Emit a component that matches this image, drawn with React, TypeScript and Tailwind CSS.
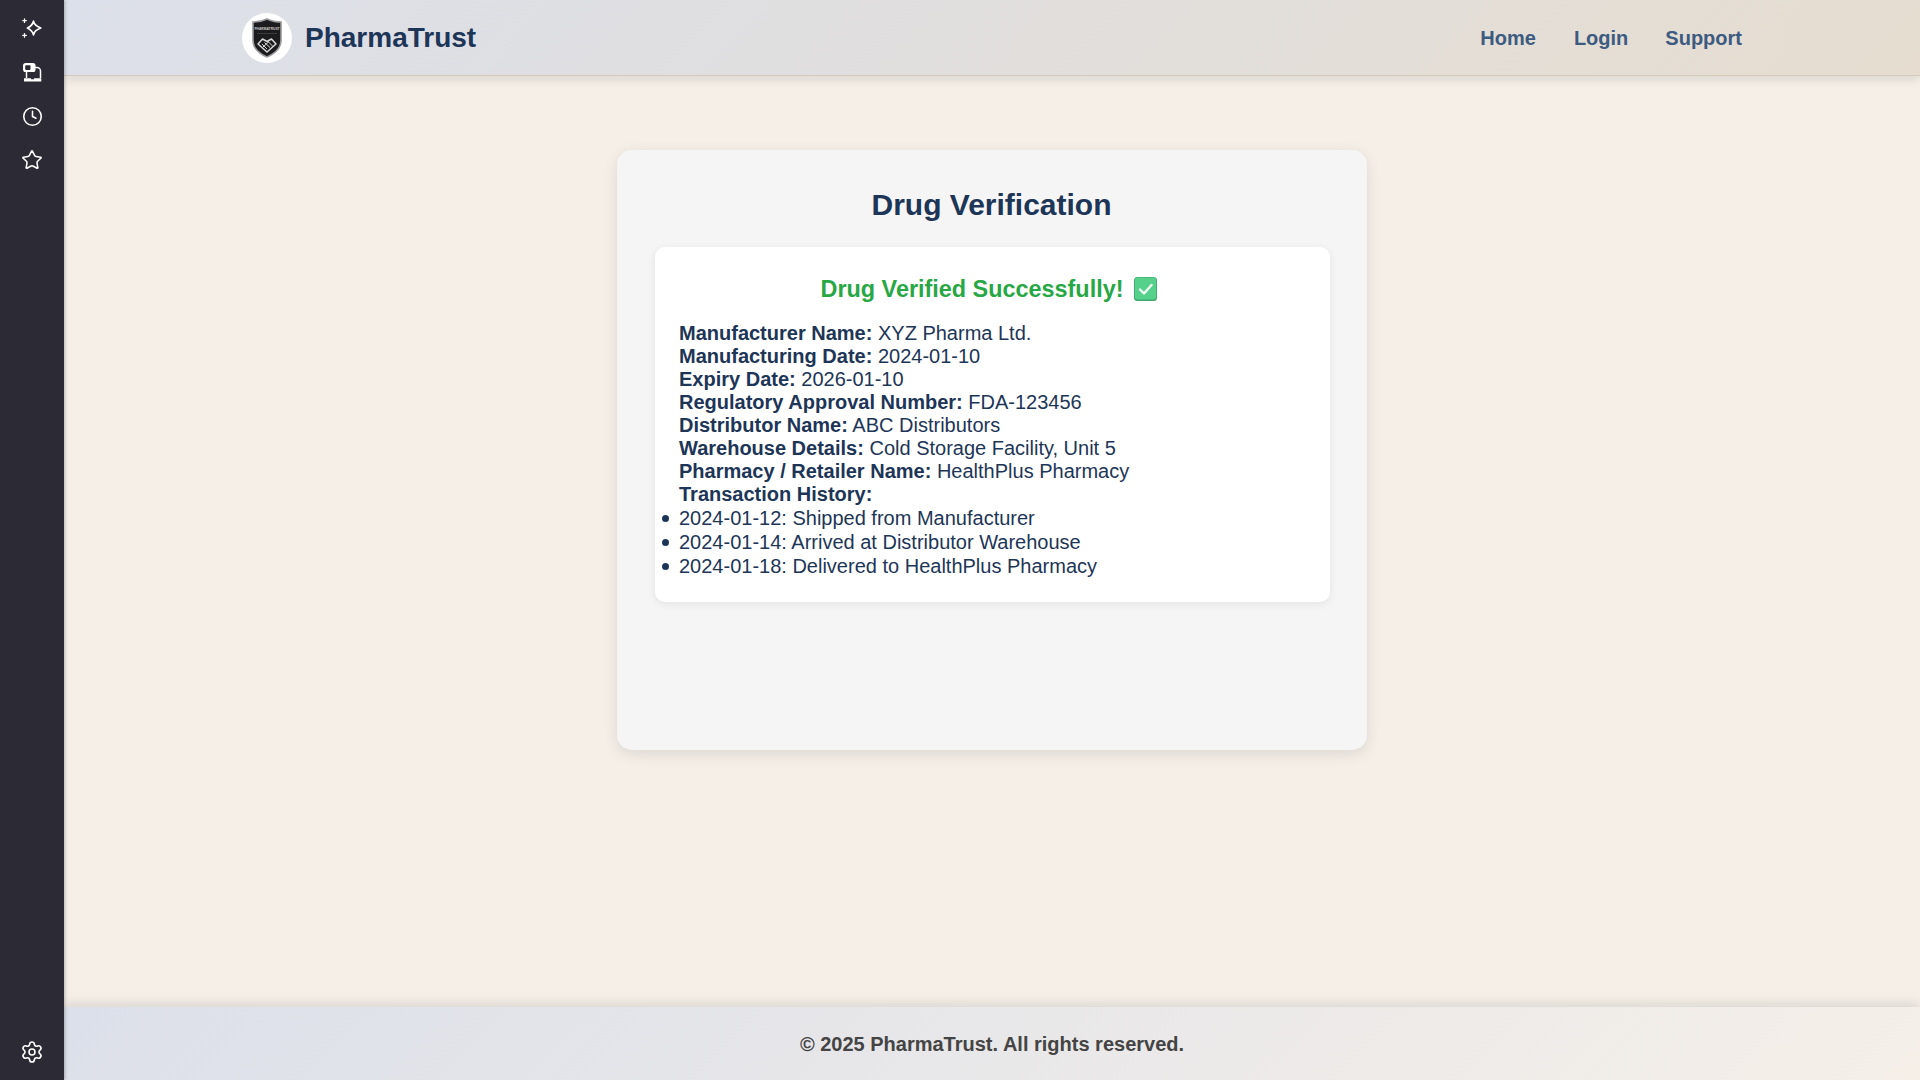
import { Clock, Settings, Star } from "lucide-react";

const rows: [string, string][] = [
  ["Manufacturer Name:", "XYZ Pharma Ltd."],
  ["Manufacturing Date:", "2024-01-10"],
  ["Expiry Date:", "2026-01-10"],
  ["Regulatory Approval Number:", "FDA-123456"],
  ["Distributor Name:", "ABC Distributors"],
  ["Warehouse Details:", "Cold Storage Facility, Unit 5"],
  ["Pharmacy / Retailer Name:", "HealthPlus Pharmacy"],
  ["Transaction History:", ""],
];

const history = [
  "2024-01-12: Shipped from Manufacturer",
  "2024-01-14: Arrived at Distributor Warehouse",
  "2024-01-18: Delivered to HealthPlus Pharmacy",
];

function Sparkle() {
  return (
    <svg width="20" height="20" viewBox="0 0 20 20" fill="none" stroke="white" strokeWidth="1.700" strokeLinejoin="round" strokeLinecap="round">
      <path d="M11.500 3.200c.6 3.300 2.200 5 7.300 6.800-5.100 1.800-6.700 3.500-7.300 6.800-.8-3.300-2.400-5-6.100-6.800 3.700-1.800 5.300-3.500 6.100-6.800z" />
      <path d="M2.500 .8v3.600M.7 2.600h3.600M2.500 15.600v3.600M.7 17.400h3.600" strokeWidth="1.300" />
    </svg>
  );
}

function Bot() {
  return (
    <svg width="19" height="19" viewBox="0 0 19 19" fill="none" stroke="white" strokeWidth="1.500" strokeLinejoin="round">
      <rect x="0.800" y="0.800" width="11" height="7.500" rx="1.800" fill="white" />
      <rect x="2.200" y="2.200" width="5.300" height="4.700" rx="0.800" fill="#2b2a35" stroke="none" />
      <path d="M11.500 4.500h2.500a3.500 3.500 0 0 1 3.500 3.500v7" />
      <path d="M3.500 8v7" />
      <path d="M1 15.300h7v1h3v-1h7.300v3.200H1z" fill="white" stroke="none" />
    </svg>
  );
}

function Logo() {
  return (
    <div className="flex h-[50px] w-[50px] items-center justify-center rounded-full bg-white">
      <svg width="32" height="40" viewBox="0 0 32 40">
        <path d="M16 1 C20 3 25 4 30 4 V22 C30 31 23 36 16 39 C9 36 2 31 2 22 V4 C7 4 12 3 16 1 Z" fill="#1c1c1e" stroke="#9a9a9c" strokeWidth="1.600" />
        <text x="16" y="11.500" textAnchor="middle" fill="#c9c9c9" fontSize="3.300" fontWeight="700" fontFamily="Liberation Sans, sans-serif">PHARMATRUST</text>
        <path d="M6 15.500h20" stroke="#3b3b3d" strokeWidth="1" />
        <path d="M16 34 L7 26 L11.500 21 L16 23.500 L20.500 21 L25 26 Z" fill="none" stroke="#d8d8d8" strokeWidth="1.500" strokeLinejoin="round" />
        <path d="M11 26 L16 31 M13.500 24.500 L19 29.500 M17.500 24 L21.500 28 M12 29 L18 23.500" stroke="#d8d8d8" strokeWidth="1" />
      </svg>
    </div>
  );
}

function CheckEmoji() {
  return (
    <svg width="23" height="24" viewBox="0 0 23 24" className="ml-[11px] mr-[5px] shrink-0">
      <rect x="0" y="0" width="23" height="24" rx="3.500" fill="#3fa66c" />
      <rect x="0.800" y="0.500" width="21.400" height="22" rx="3" fill="#55d18c" />
      <path d="M6 12.500 L10 16.500 L17.500 8" fill="none" stroke="#f4fbf6" strokeWidth="2.400" strokeLinecap="round" strokeLinejoin="round" />
    </svg>
  );
}

export default function App() {
  return (
    <div className="flex h-screen w-full overflow-hidden bg-[#f5efe8] font-['Liberation_Sans',Arial,sans-serif] text-[#1d3557]">
      <aside className="relative z-20 flex w-16 shrink-0 flex-col items-center justify-between bg-[#2b2a35] pb-[16px] pt-[6px] shadow-[1px_0_3px_rgba(0,0,0,0.25)]">
        <div className="flex flex-col items-center text-white">
          <div className="flex h-[44px] items-center"><Sparkle /></div>
          <div className="flex h-[44px] items-center"><Bot /></div>
          <div className="flex h-[44px] items-center"><Clock size={21} strokeWidth={1.8} /></div>
          <div className="flex h-[44px] items-center"><Star size={22} strokeWidth={1.7} /></div>
        </div>
        <Settings size={24} strokeWidth={1.6} className="text-white" />
      </aside>

      <div className="flex min-w-0 flex-1 flex-col">
        <header className="relative z-10 flex h-[76px] shrink-0 items-center justify-between border-b border-[#d6cbbb] bg-[linear-gradient(135deg,#dce0ea,#e6ddd0)] pl-[178px] pr-[178px] shadow-[0_4px_10px_rgba(0,0,0,0.1)]">
          <div className="flex items-center">
            <Logo />
            <span className="ml-[13px] text-[28px] font-bold text-[#1d3557]">PharmaTrust</span>
          </div>
          <nav className="flex gap-[37px] text-[20px] font-bold text-[#3d5a80]">
            <span className="mr-px">Home</span>
            <span>Login</span>
            <span>Support</span>
          </nav>
        </header>

        <main className="flex min-h-0 flex-1 justify-center pt-[74px]">
          <section className="h-[600px] w-[750px] rounded-[15px] bg-[#f5f5f5] pl-[38px] pr-[37px] pt-[37px] shadow-[0_4px_15px_rgba(0,0,0,0.1)]">
            <h1 className="pr-[2px] text-center text-[30px] font-bold leading-[36px] text-[#1d3557]">Drug Verification</h1>
            <div className="mt-[24px] rounded-[10px] bg-white pb-[24px] pl-[24px] pr-[26px] pt-[28px] shadow-[0_2px_8px_rgba(0,0,0,0.08)]">
              <h3 className="flex items-center justify-center text-[23.400px] font-bold leading-[28px] text-[#28a745]">
                Drug Verified Successfully!
                <CheckEmoji />
              </h3>
              <div className="mt-[19px] text-[20px]">
                {rows.map(([k, v]) => (
                  <p key={k} className="leading-[23px]">
                    <strong>{k}</strong> {v}
                  </p>
                ))}
                <ul>
                  {history.map((h) => (
                    <li key={h} className="relative leading-[24px] before:absolute before:left-[-17px] before:top-[9px] before:h-[7px] before:w-[7px] before:rounded-full before:bg-[#1d3557] before:content-['']">{h}</li>
                  ))}
                </ul>
              </div>
            </div>
          </section>
        </main>

        <footer className="relative z-10 flex h-[73px] shrink-0 items-center justify-center bg-[linear-gradient(135deg,#dce0ea,#f5efe8)] text-[20px] font-bold text-[#444444] shadow-[0_-4px_10px_rgba(0,0,0,0.1)]">
          © 2025 PharmaTrust. All rights reserved.
        </footer>
      </div>
    </div>
  );
}
